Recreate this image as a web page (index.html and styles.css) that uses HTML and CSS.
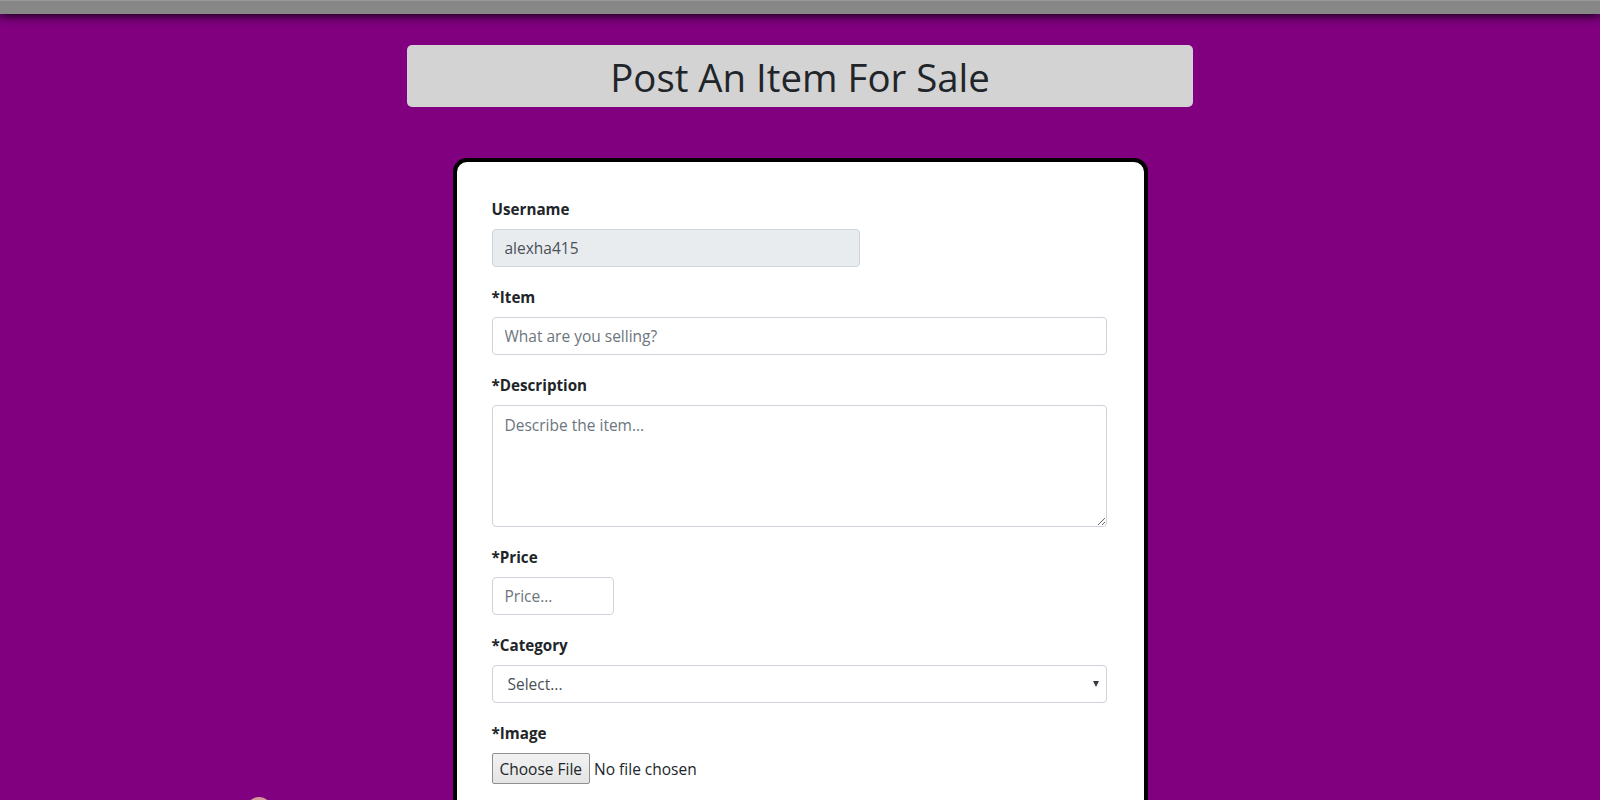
FILE: index.html
```html
<!DOCTYPE html>
<html lang="en">
<head>
<meta charset="utf-8">
<title>Post An Item For Sale</title>
<link rel="stylesheet" href="styles.css">
</head>
<body>
<header class="topbar"></header>
<main class="page">
  <h1 class="title-box">Post An Item For Sale</h1>
  <form class="card">
    <div class="group">
      <label class="label" for="username">Username</label>
      <input class="field field-short field-readonly" id="username" type="text" value="alexha415" readonly>
    </div>
    <div class="group">
      <label class="label" for="item">*Item</label>
      <input class="field" id="item" type="text" placeholder="What are you selling?">
    </div>
    <div class="group">
      <label class="label" for="desc">*Description</label>
      <textarea class="field field-area" id="desc" placeholder="Describe the item..."></textarea>
    </div>
    <div class="group">
      <label class="label" for="price">*Price</label>
      <input class="field field-price" id="price" type="text" placeholder="Price...">
    </div>
    <div class="group">
      <label class="label" for="category">*Category</label>
      <div class="select-wrap">
        <select class="field field-select" id="category">
          <option>Select...</option>
        </select>
      </div>
    </div>
    <div class="group">
      <label class="label" for="image">*Image</label>
      <input class="file" id="image" type="file">
    </div>
    <div class="group spacer"></div>
  </form>
</main>
<div class="corner-dot"></div>
</body>
</html>
```
FILE: styles.css
```css
* { box-sizing: border-box; }

html, body { height: 100%; }

body {
  margin: 0;
  background: #800080;
  font-family: "Open Sans", "Noto Sans", sans-serif;
  color: #212529;
  overflow: hidden;
}

.topbar {
  height: 14px;
  background: #878787;
  border-top: 1px solid #9a9a9a;
  box-shadow: 0 3px 9px rgba(0, 0, 0, 0.75);
  position: relative;
  z-index: 2;
}

.page {
  display: flex;
  flex-direction: column;
  align-items: center;
}

.title-box {
  margin: 31px 0 0;
  width: 786px;
  height: 62px;
  background: #d3d3d3;
  border-radius: 5px;
  display: flex;
  align-items: center;
  justify-content: center;
  font-family: "Open Sans", "Noto Sans", sans-serif;
  font-weight: 400;
  font-size: 38.4px;
  letter-spacing: 0;
  color: #212529;
  padding-top: 2px;
}

.card {
  margin-top: 51px;
  width: 695px;
  background: #fff;
  border: 4px solid #000;
  border-radius: 14px;
  padding: 35px 37px 40px 35px;
}

.group {
  display: flex;
  flex-direction: column;
  align-items: flex-start;
  margin-bottom: 18px;
}

.label {
  font-weight: 700;
  font-size: 15.2px;
  line-height: 24px;
  margin-bottom: 8px;
}

.field {
  width: 100%;
  height: 38px;
  padding: 6px 12px;
  font-family: "Open Sans", "Noto Sans", sans-serif;
  font-size: 15.5px;
  line-height: 24px;
  color: #495057;
  background: #fff;
  border: 1px solid #ced4da;
  border-radius: 4px;
  outline: none;
}

.field::placeholder { color: #6c757d; opacity: 1; }

.field-short { width: 368px; }

.field-readonly { background: #e9ecef; }

.field-area {
  height: 122px;
  resize: vertical;
  padding-top: 7px;
}

.field-price { width: 122px; }

.select-wrap {
  position: relative;
  width: 100%;
}

.field-select {
  appearance: none;
  -webkit-appearance: none;
  padding-left: 15px;
  color: #495057;
}

.select-wrap::after {
  content: "";
  position: absolute;
  right: 8px;
  top: 16px;
  border-left: 3.5px solid transparent;
  border-right: 3.5px solid transparent;
  border-top: 6px solid #343a40;
  pointer-events: none;
}

.file {
  font-family: "Open Sans", "Noto Sans", sans-serif;
  font-size: 15.5px;
  color: #212529;
  height: 31px;
}

.file::file-selector-button {
  font-family: "Open Sans", "Noto Sans", sans-serif;
  font-size: 15.5px;
  color: #212529;
  height: 31px;
  padding: 0 7px;
  margin-right: 4px;
  background: linear-gradient(#f2f2f2, #e4e4e4);
  border: 1px solid #8f8f8f;
  border-radius: 2px;
}

.spacer { height: 60px; }

.corner-dot {
  position: fixed;
  left: 246px;
  top: 797px;
  width: 26px;
  height: 26px;
  border-radius: 50%;
  background: #d49a9a;
}
```
